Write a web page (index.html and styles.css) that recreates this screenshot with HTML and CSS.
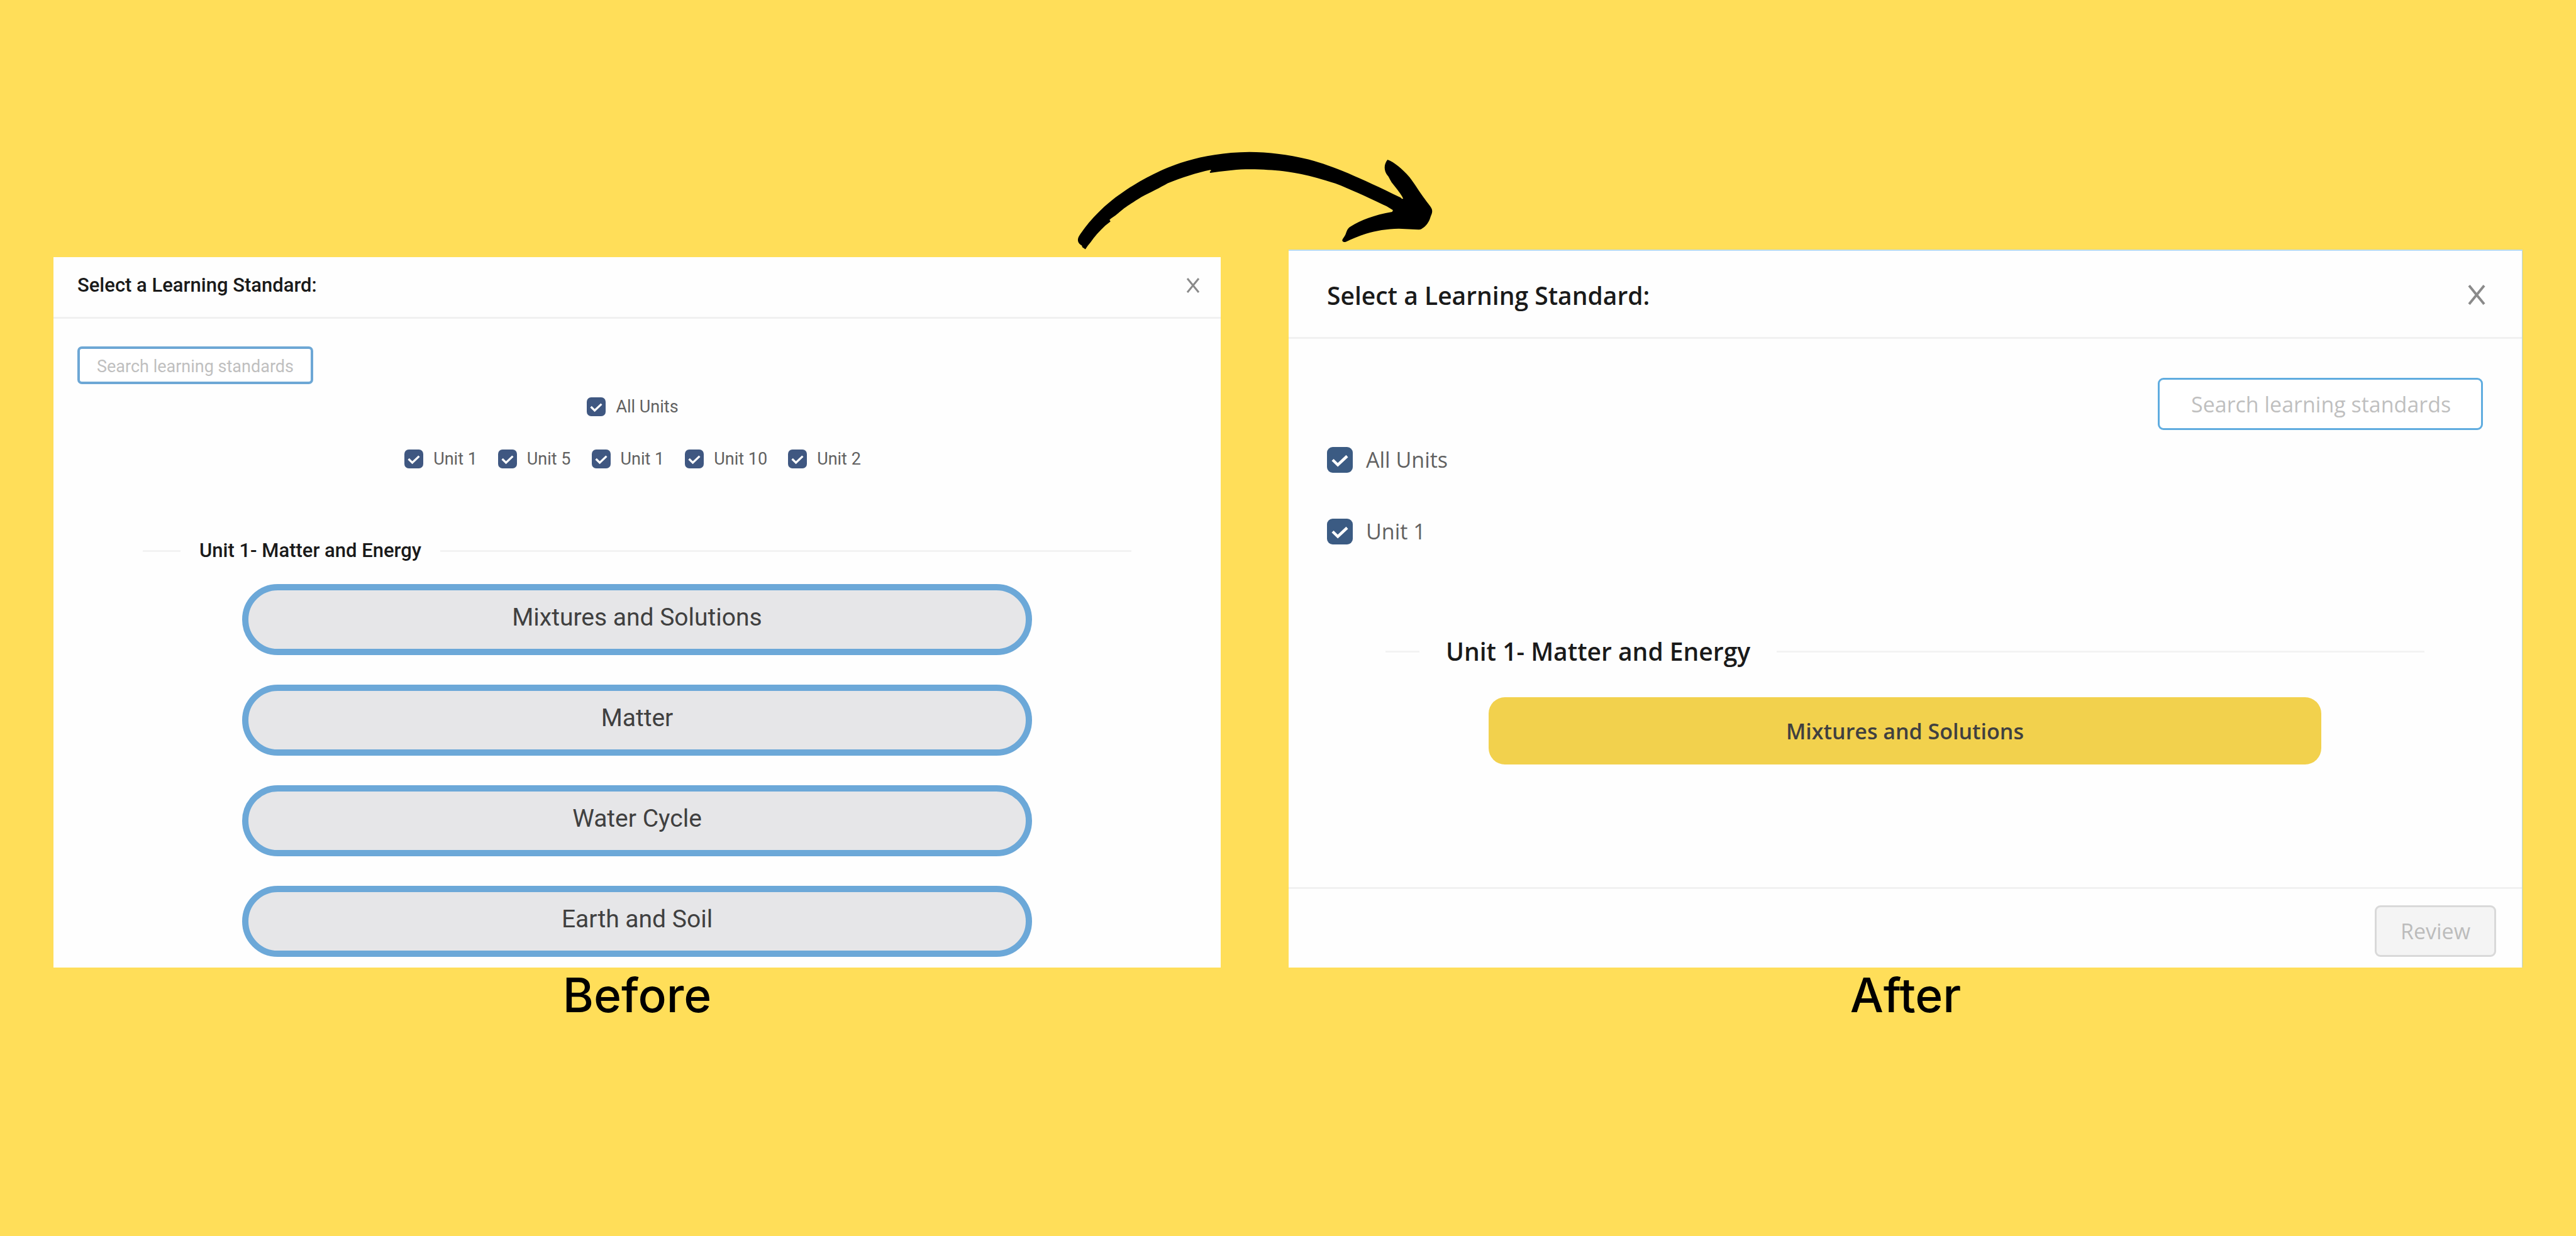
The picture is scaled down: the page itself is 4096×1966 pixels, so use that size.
FILE: index.html
```html
<!DOCTYPE html>
<html lang="en">
<head>
<meta charset="utf-8">
<title>Before and After</title>
<link rel="stylesheet" href="styles.css">
</head>
<body>
<main class="board">
  <svg class="arrow" viewBox="0 0 1568 672" preserveAspectRatio="none" aria-hidden="true">
    <path d="M115 670L103 658L101 648C88 640 82 620 88 600C95 580 120 530 135 505C170 445 210 390 255 345C310 285 400 215 450 188C520 148 620 107 755 105C820 105 900 118 985 148C1080 185 1180 250 1345 370L1350 377L1355 376C1345 345 1332 325 1313 288C1302 265 1300 250 1293 240C1278 210 1280 175 1294 150C1320 165 1350 200 1380 252C1400 290 1415 330 1440 380C1452 405 1462 420 1467 438C1470 455 1466 465 1462 480C1457 505 1450 525 1435 543L1425 553Q1421 556 1416 556L1338 551C1290 553 1250 562 1210 580C1180 594 1155 610 1131 627Q1120 632 1117 620C1118 608 1126 600 1131 580C1136 560 1138 548 1150 538C1190 500 1240 472 1312 453L1315 443L1303 432L1290 420L1275 410C1210 365 1150 322 1090 288C1040 264 1000 247 955 233C880 212 830 205 740 205C690 208 650 216 602 226L600 221L606 212L602 209C550 226 490 253 436 287C410 310 365 342 333 367C300 398 285 412 267 431L232 474L215 491L209 499L213 509L192 533C170 566 150 595 135 630Q123 650 115 670Z"/>
  </svg>
  <div class="comparison">
    <figure class="side">
      <section class="dialog dialog-before">
        <header class="dialog-head">
          <h2 class="dialog-title">Select a Learning Standard:</h2>
          <button class="close" type="button" aria-label="Close">
            <svg class="close-icon" viewBox="0 0 22 24" aria-hidden="true"><path d="M2 1L20 23M20 1L2 23"/></svg>
          </button>
        </header>
        <div class="dialog-body">
          <input class="search" type="text" placeholder="Search learning standards" aria-label="Search learning standards">
          <div class="checks checks-all">
            <label class="check"><input class="tick" type="checkbox" checked>All Units</label>
          </div>
          <div class="checks checks-units">
            <label class="check"><input class="tick" type="checkbox" checked>Unit 1</label>
            <label class="check"><input class="tick" type="checkbox" checked>Unit 5</label>
            <label class="check"><input class="tick" type="checkbox" checked>Unit 1</label>
            <label class="check"><input class="tick" type="checkbox" checked>Unit 10</label>
            <label class="check"><input class="tick" type="checkbox" checked>Unit 2</label>
          </div>
          <h3 class="divider">Unit 1- Matter and Energy</h3>
          <div class="standards">
            <button class="standard" type="button">Mixtures and Solutions</button>
            <button class="standard" type="button">Matter</button>
            <button class="standard" type="button">Water Cycle</button>
            <button class="standard" type="button">Earth and Soil</button>
          </div>
        </div>
      </section>
      <figcaption class="caption">Before</figcaption>
    </figure>

    <figure class="side">
      <section class="dialog dialog-after">
        <header class="dialog-head">
          <h2 class="dialog-title">Select a Learning Standard:</h2>
          <button class="close" type="button" aria-label="Close">
            <svg class="close-icon" viewBox="0 0 22 24" aria-hidden="true"><path d="M2 1L20 23M20 1L2 23"/></svg>
          </button>
        </header>
        <div class="dialog-body">
          <input class="search" type="text" placeholder="Search learning standards" aria-label="Search learning standards">
          <div class="checks checks-all">
            <label class="check"><input class="tick" type="checkbox" checked>All Units</label>
          </div>
          <div class="checks checks-units">
            <label class="check"><input class="tick" type="checkbox" checked>Unit 1</label>
          </div>
          <h3 class="divider">Unit 1- Matter and Energy</h3>
          <div class="standards">
            <button class="standard" type="button">Mixtures and Solutions</button>
          </div>
        </div>
        <footer class="dialog-foot">
          <button class="review" type="button" disabled>Review</button>
        </footer>
      </section>
      <figcaption class="caption">After</figcaption>
    </figure>
  </div>
</main>
</body>
</html>
```

FILE: styles.css
```css
*,
*::before,
*::after {
  box-sizing: border-box;
}

body {
  margin: 0;
  min-height: 100vh;
  background: #ffde59;
  color: #1a1a1a;
}

h2,
h3,
figure {
  margin: 0;
}

button,
input {
  font: inherit;
  margin: 0;
}

.board {
  padding-top: 213px;
}

.arrow {
  display: block;
  width: 639px;
  height: 184px;
  margin-left: 41%;
}

.comparison {
  display: grid;
  grid-template-columns: 1856fr 1962fr;
  align-items: end;
  column-gap: 108px;
  padding: 0 85px;
}

.caption {
  margin-top: 8px;
  font: 500 75px/72px Inter, "Liberation Sans", sans-serif;
  color: #000;
  text-align: center;
}

/* Shared dialog parts */

.dialog {
  background: #fefefe;
}

.dialog-head {
  display: flex;
  align-items: center;
  justify-content: space-between;
  border-bottom: 3px solid #f1f1f1;
}

.close {
  display: flex;
  padding: 0;
  border: 0;
  background: none;
}

.close-icon {
  fill: none;
  stroke: #8a8a8a;
  stroke-width: 3;
}

.dialog-body {
  display: flex;
  flex-direction: column;
}

.search {
  border: 3px solid #5facdf;
  border-radius: 9px;
  background: #fff;
  outline: 0;
}

.search::placeholder {
  color: #bfbfbf;
  opacity: 1;
}

.checks {
  display: flex;
}

.check {
  display: flex;
  align-items: center;
  color: #616161;
}

.tick {
  appearance: none;
  background: #3b5b83 url("data:image/svg+xml,%3Csvg xmlns='http://www.w3.org/2000/svg' viewBox='0 0 41 41'%3E%3Cpath d='M9 20.500l8.200 8L32 14.500' fill='none' stroke='%23fff' stroke-width='4.500'/%3E%3C/svg%3E") center / 100% no-repeat;
}

.divider {
  display: flex;
  align-items: center;
  line-height: 40px;
  white-space: nowrap;
}

.divider::before,
.divider::after {
  content: "";
  height: 3px;
  background: #f3f3f3;
}

.divider::after {
  flex: 1;
}

.standards {
  display: flex;
  flex-direction: column;
}

.standard {
  color: #404040;
  text-align: center;
}

/* Before */

.dialog-before {
  padding-bottom: 17px;
  font: 400 27px/30px Roboto, "Liberation Sans", sans-serif;
}

.dialog-before .dialog-head {
  height: 98px;
  padding: 0 33px 5px 38px;
}

.dialog-before .dialog-title,
.dialog-before .divider {
  font-size: 31px;
  font-weight: 500;
}

.dialog-before .close-icon {
  width: 22px;
  height: 24px;
}

.dialog-before .dialog-body {
  padding: 44px 38px 0;
}

.dialog-before .search {
  width: 375px;
  height: 60px;
  padding: 3px 20px 0 27px;
  border: 4px solid #6da7d5;
  border-radius: 7px;
}

.dialog-before .checks {
  justify-content: center;
  gap: 19px;
}

.dialog-before .checks-all {
  margin-top: 21px;
}

.dialog-before .checks-units {
  margin-top: 53px;
}

.dialog-before .check {
  gap: 16px;
  padding-right: 14px;
}

.dialog-before .tick {
  width: 30px;
  height: 30px;
  border-radius: 7px;
  background-color: #3f5781;
}

.dialog-before .divider {
  gap: 30px;
  margin: 111px 104px 0;
}

.dialog-before .divider::before {
  width: 60px;
}

.dialog-before .standards {
  gap: 47px;
  padding: 33px 262px 0;
}

.dialog-before .standard {
  height: 113px;
  padding: 0 0 8px;
  border: 10px solid #6ca8d8;
  border-radius: 57px;
  background: #e6e6e8;
  font-size: 39px;
}

/* After */

.dialog-after {
  border-top: 2px solid #b9dbf3;
  border-right: 1px solid #b0d3ea;
  font: 400 34px/41px "Open Sans", "Noto Sans", sans-serif;
}

.dialog-after .dialog-head {
  height: 140px;
  padding: 3px 57px 0 61px;
}

.dialog-after .dialog-title,
.dialog-after .divider {
  font-size: 39px;
  font-weight: 600;
}

.dialog-after .close-icon {
  width: 30px;
  height: 32px;
}

.dialog-after .dialog-body {
  padding: 62px 62px 195px 61px;
}

.dialog-after .search {
  align-self: flex-end;
  width: 517px;
  height: 83px;
  padding: 0 30px 0 50px;
}

.dialog-after .checks-all {
  margin-top: 27px;
}

.dialog-after .checks-units {
  margin-top: 73px;
}

.dialog-after .check {
  gap: 21px;
}

.dialog-after .tick {
  width: 41px;
  height: 41px;
  border-radius: 9px;
}

.dialog-after .divider {
  gap: 42px;
  margin: 150px 93px 0;
}

.dialog-after .divider::before {
  width: 54px;
}

.dialog-after .standards {
  padding: 53px 257px 0;
}

.dialog-after .standard {
  height: 107px;
  padding: 2px 0 0;
  border: 0;
  border-radius: 26px;
  background: #f2d14d;
  font-weight: 600;
}

.dialog-foot {
  display: flex;
  justify-content: flex-end;
  padding: 26px 41px 17px;
  border-top: 3px solid #f1f1f1;
}

.review {
  width: 193px;
  height: 82px;
  padding: 0;
  border: 3px solid #d9d9d9;
  border-radius: 9px;
  background: #f4f4f4;
  color: #bcbcbc;
}
```
